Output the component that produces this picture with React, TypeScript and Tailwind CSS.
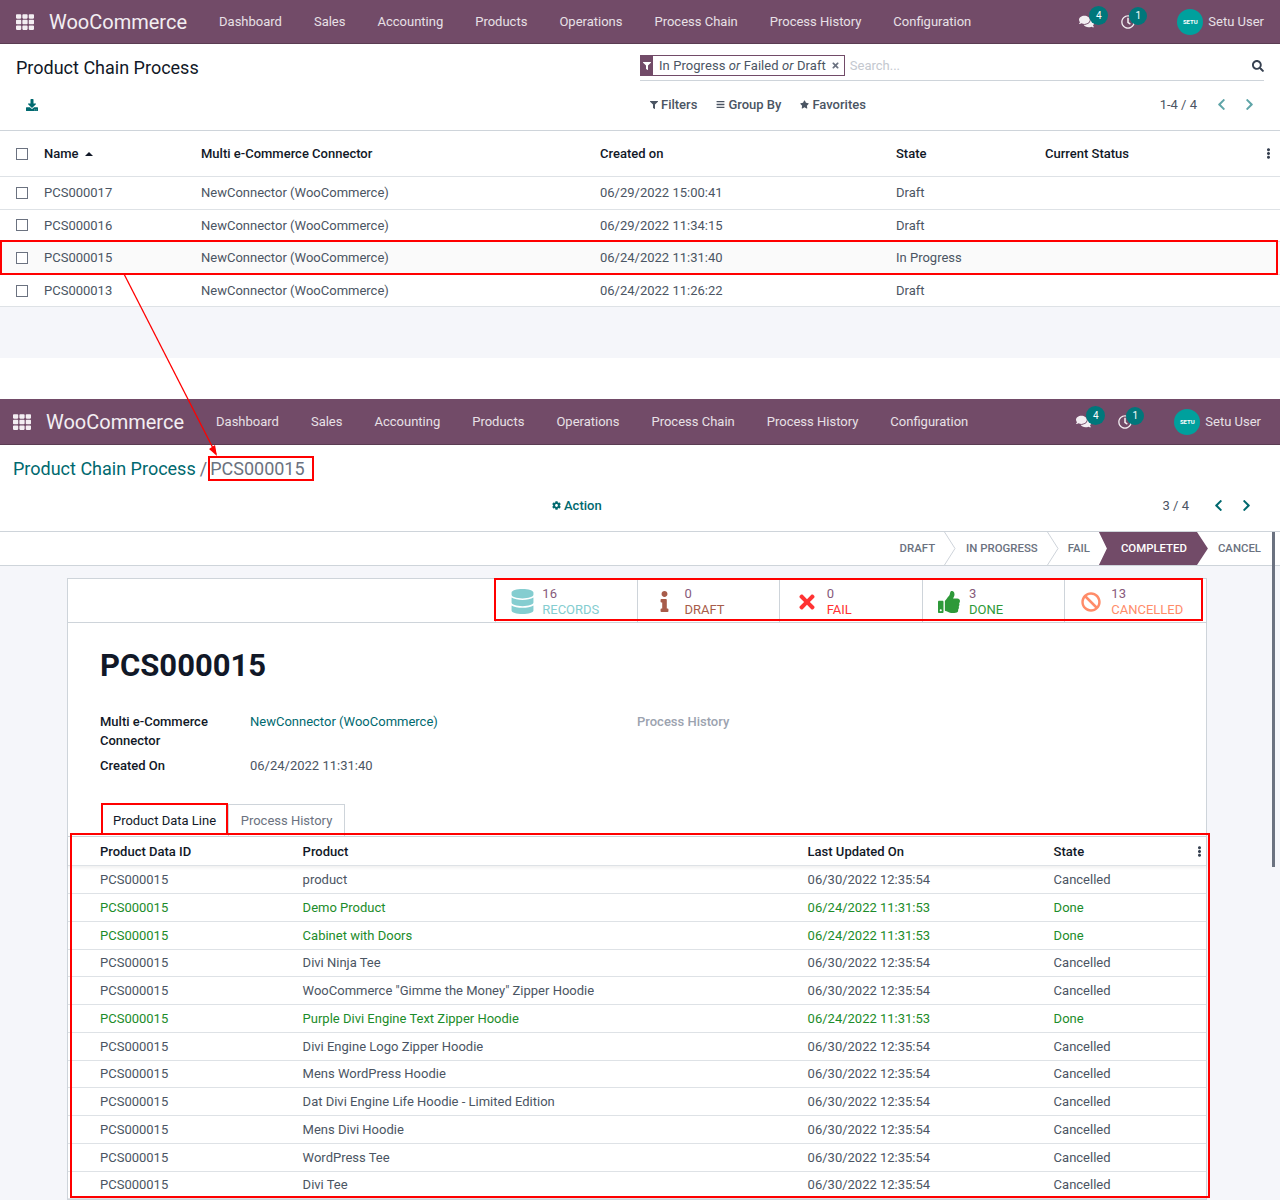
import type { ReactNode } from "react";
import {
  FaBan,
  FaBars,
  FaChevronLeft,
  FaChevronRight,
  FaCog,
  FaComments,
  FaDatabase,
  FaDownload,
  FaEllipsisV,
  FaFilter,
  FaInfo,
  FaRegClock,
  FaSearch,
  FaStar,
  FaTh,
  FaThumbsUp,
  FaTimes,
} from "react-icons/fa";

const MENU = [
  "Dashboard",
  "Sales",
  "Accounting",
  "Products",
  "Operations",
  "Process Chain",
  "Process History",
  "Configuration",
];

const LIST_ROWS = [
  { name: "PCS000017", created: "06/29/2022 15:00:41", state: "Draft" },
  { name: "PCS000016", created: "06/29/2022 11:34:15", state: "Draft" },
  { name: "PCS000015", created: "06/24/2022 11:31:40", state: "In Progress" },
  { name: "PCS000013", created: "06/24/2022 11:26:22", state: "Draft" },
];

const LINES = [
  { product: "product", done: false },
  { product: "Demo Product", done: true },
  { product: "Cabinet with Doors", done: true },
  { product: "Divi Ninja Tee", done: false },
  { product: 'WooCommerce "Gimme the Money" Zipper Hoodie', done: false },
  { product: "Purple Divi Engine Text Zipper Hoodie", done: true },
  { product: "Divi Engine Logo Zipper Hoodie", done: false },
  { product: "Mens WordPress Hoodie", done: false },
  { product: "Dat Divi Engine Life Hoodie - Limited Edition", done: false },
  { product: "Mens Divi Hoodie", done: false },
  { product: "WordPress Tee", done: false },
  { product: "Divi Tee", done: false },
];

const STATS = [
  { icon: <FaDatabase className="text-[25px]" />, count: "16", label: "RECORDS", color: "text-[#84cdd0]" },
  { icon: <FaInfo className="text-[21px]" />, count: "0", label: "DRAFT", color: "text-[#a85c4a]" },
  { icon: <FaTimes className="text-[22px]" />, count: "0", label: "FAIL", color: "text-[#ff3333]" },
  { icon: <FaThumbsUp className="text-[22px]" />, count: "3", label: "DONE", color: "text-[#2e9939]" },
  { icon: <FaBan className="text-[20px]" />, count: "13", label: "CANCELLED", color: "text-[#ff8c69]" },
];

function Checkbox() {
  return <span className="block h-3 w-3 border border-[#6b7280] bg-white" />;
}

function NavBar({ pl, pr, h }: { pl: string; pr: string; h: string }) {
  return (
    <div className={`flex items-center border-b border-[#5a3c52] bg-[#724b68] text-white ${h} ${pl} ${pr}`}>
      <FaTh className="text-[18px] text-[#f3eef2]" />
      <span className="ml-[15px] text-[20px] leading-none text-[#f3eef2]">WooCommerce</span>
      <div className="ml-[32px] flex gap-[32px] text-[13px] text-[#e8e0e6]">
        {MENU.map((m) => (
          <span key={m}>{m}</span>
        ))}
      </div>
      <div className="ml-auto flex items-center text-[#f3eef2]">
        <span className="relative">
          <FaComments className="text-[15px]" />
          <span className="absolute -top-[8px] left-[10px] flex h-[19px] w-[19px] items-center justify-center rounded-full bg-[#00777b] text-[10px] text-white">
            4
          </span>
        </span>
        <span className="relative ml-[27px]">
          <FaRegClock className="text-[14px]" />
          <span className="absolute -top-[8px] left-[8px] flex h-[18px] w-[18px] items-center justify-center rounded-full bg-[#00777b] text-[10px] text-white">
            1
          </span>
        </span>
        <span className="ml-[42px] flex h-[26px] w-[26px] items-center justify-center rounded-full bg-[#00a09d] text-[6px] font-bold text-white">
          SETU
        </span>
        <span className="ml-[5px] text-[13px] text-[#e8e0e6]">Setu User</span>
      </div>
    </div>
  );
}

function Pager({ label, color, gap }: { label: string; color: string; gap: string }) {
  return (
    <div className="flex items-center text-[13px] text-[#4b5563]">
      <span>{label}</span>
      <FaChevronLeft className={`text-[13px] ${gap} ${color}`} />
      <FaChevronRight className={`ml-[15px] text-[13px] ${color}`} />
    </div>
  );
}

function ListView() {
  const cols = "grid grid-cols-[28px_157px_399px_296px_149px_1fr_16px] items-center";
  return (
    <div className="h-[358px] bg-[#f5f6fa]">
      <NavBar h="h-[44px]" pl="pl-[16px]" pr="pr-[16px]" />
      <div className="relative h-[87px] border-b border-[#ced4da] bg-white">
        <div className="flex items-start justify-between pl-[16px] pr-[16px] pt-[12px]">
          <span className="text-[18px] leading-[24px] text-[#111827]">Product Chain Process</span>
          <div className="flex h-[25px] w-[624px] items-center border-b border-[#ced4da] pb-[5px]">
            <span className="flex h-[21px] w-[13px] items-center justify-center bg-[#724b68] text-white">
              <FaFilter className="text-[8px]" />
            </span>
            <span className="flex h-[21px] items-center border border-l-0 border-[#724b68] pl-[6px] pr-[4px] text-[13px] tracking-[0.07px] text-[#4b5563]">
              <span>
                In Progress <i>or</i> Failed <i>or</i> Draft
              </span>
              <FaTimes className="ml-[5px] text-[9px] text-[#6b7280]" />
            </span>
            <span className="ml-[5px] text-[13px] text-[#c4c8cf]">Search...</span>
            <FaSearch className="ml-auto text-[12px] text-[#374151]" />
          </div>
        </div>
        <div className="mt-[14px] flex items-center pl-[26px] pr-[24px]">
          <FaDownload className="text-[12px] text-[#00696f]" />
          <div className="ml-[612px] flex items-center gap-[19px] text-[13px] font-medium text-[#4b5563]">
            <span className="flex items-center gap-[3px]">
              <FaFilter className="text-[8px]" />
              Filters
            </span>
            <span className="flex items-center gap-[3px]">
              <FaBars className="text-[9px]" />
              Group By
            </span>
            <span className="flex items-center gap-[3px]">
              <FaStar className="text-[9px]" />
              Favorites
            </span>
          </div>
          <div className="ml-auto">
            <Pager label="1-4 / 4" color="text-[#5fa5a8]" gap="ml-[18px]" />
          </div>
        </div>
      </div>
      <div className={`${cols} h-[46px] border-b border-[#dee2e6] bg-white pl-[16px] text-[13px] font-medium text-[#111827] shadow-[0_2px_3px_rgba(0,0,0,0.06)]`}>
        <Checkbox />
        <span className="flex items-center gap-[6px]">
          Name
          <span className="h-0 w-0 border-x-[4px] border-b-[4px] border-x-transparent border-b-[#111827]" />
        </span>
        <span>Multi e-Commerce Connector</span>
        <span>Created on</span>
        <span>State</span>
        <span>Current Status</span>
        <FaEllipsisV className="-ml-[1px] text-[11px] text-[#374151]" />
      </div>
      {LIST_ROWS.map((r, i) => (
        <div
          key={r.name}
          className={`${cols} h-[32.6px] border-b border-[#dee2e6] pl-[16px] text-[13px] text-[#4b5563] ${
            i === 2 ? "bg-[#fafafa]" : "bg-white"
          }`}
        >
          <Checkbox />
          <span>{r.name}</span>
          <span>NewConnector (WooCommerce)</span>
          <span>{r.created}</span>
          <span>{r.state}</span>
        </div>
      ))}
    </div>
  );
}

function Stat({ icon, count, label, color }: { icon: ReactNode; count: string; label: string; color: string }) {
  return (
    <div className="flex h-full w-[142.25px] items-center border-l border-[#ced4da] pt-[2px]">
      <span className={`flex w-[46.5px] justify-center pl-[6px] ${color}`}>{icon}</span>
      <div className="text-[13px] leading-[16px]">
        <div className="tracking-[0.3px] text-[#875a7b]">{count}</div>
        <div className={color}>{label}</div>
      </div>
    </div>
  );
}

function Separator() {
  return (
    <svg width="12" height="33" viewBox="0 0 12 33" className="ml-[9px] mr-[10px]" fill="none" stroke="#ced4da">
      <path d="M0.5 0 L11 16.5 L0.5 33" />
    </svg>
  );
}

function FormView() {
  const lineCols = "grid grid-cols-[202.6px_505px_246px_1fr_16px] items-center pl-[32px]";
  return (
    <div className="h-[801px] overflow-hidden bg-[#f5f6fa]">
      <NavBar h="h-[46px]" pl="pl-[13px]" pr="pr-[19px]" />
      <div className="h-[87px] border-b border-[#ced4da] bg-white">
        <div className="flex h-[47px] items-center pl-[13px] text-[18px]">
          <span className="text-[#00696f]">Product Chain Process</span>
          <span className="ml-[4px] mr-[3px] text-[#6b7280]">/</span>
          <span className="text-[#6b7280]">PCS000015</span>
        </div>
        <div className="mt-[4px] flex items-center pr-[27px]">
          <span className="ml-[552px] flex items-center gap-[3px] text-[13px] font-medium text-[#00696f]">
            <FaCog className="text-[9px]" />
            Action
          </span>
          <div className="ml-auto">
            <Pager label="3 / 4" color="text-[#00696f]" gap="ml-[23px]" />
          </div>
        </div>
      </div>
      <div className="flex h-[34px] items-center justify-end border-b border-[#ced4da] bg-white pr-[19px] text-[11.4px] font-medium text-[#6b7280]">
        <span>DRAFT</span>
        <Separator />
        <span>IN PROGRESS</span>
        <Separator />
        <span className="-ml-[1px]">FAIL</span>
        <span className="ml-[9px] flex h-[33px] w-[109px] items-center bg-[#724b68] pl-[22px] text-white [clip-path:polygon(0_0,90%_0,100%_50%,90%_100%,0_100%,8px_50%)]">
          COMPLETED
        </span>
        <span className="ml-[10px]">CANCEL</span>
      </div>
      <div className="relative mx-[67px] mt-[12px] w-[1140px] border border-[#ced4da] bg-white">
        <div className="flex h-[44px] justify-end border-b border-[#ced4da]">
          {STATS.map((s) => (
            <Stat key={s.label} {...s} />
          ))}
        </div>
        <div className="px-[32px] pt-[23px]">
          <h1 className="text-[31px] font-bold leading-[40px] text-[#111827]">PCS000015</h1>
          <div className="mt-[26px] flex text-[13px] leading-[19px]">
            <div className="w-[150px] font-medium text-[#111827]">
              Multi e-Commerce
              <br />
              Connector
            </div>
            <div className="w-[387px] text-[#00696f]">NewConnector (WooCommerce)</div>
            <div className="font-medium text-[#9ca3af]">Process History</div>
          </div>
          <div className="mt-[6px] flex text-[13px] leading-[19px]">
            <div className="w-[150px] font-medium text-[#111827]">Created On</div>
            <div className="text-[#4b5563]">06/24/2022 11:31:40</div>
          </div>
        </div>
        <div className="mt-[30px] flex h-[32px] items-end border-b border-[#ced4da] pl-[33px] text-[13px]">
          <span className="flex h-[31px] w-[127px] items-center justify-center bg-white text-[#111827]">Product Data Line</span>
          <span className="-mb-[1px] flex h-[33px] w-[117px] items-center justify-center border border-[#ced4da] text-[#6b7280]">
            Process History
          </span>
        </div>
        <div className={`${lineCols} h-[29.4px] border-b border-[#dee2e6] pt-[1px] text-[13px] font-medium text-[#111827] shadow-[0_2px_3px_rgba(0,0,0,0.06)]`}>
          <span>Product Data ID</span>
          <span>Product</span>
          <span>Last Updated On</span>
          <span>State</span>
          <FaEllipsisV className="ml-[4px] text-[11px] text-[#374151]" />
        </div>
        {LINES.map((l, i) => (
          <div
            key={i}
            className={`${lineCols} h-[27.75px] border-b border-[#dee2e6] text-[13px] ${
              l.done ? "text-[#1c8c2a]" : "text-[#4b5563]"
            }`}
          >
            <span>PCS000015</span>
            <span>{l.product}</span>
            <span>{l.done ? "06/24/2022 11:31:53" : "06/30/2022 12:35:54"}</span>
            <span>{l.done ? "Done" : "Cancelled"}</span>
          </div>
        ))}
      </div>
    </div>
  );
}

function Annotations() {
  const box = "absolute border-2 border-[#ff0000]";
  return (
    <>
      <div className={`${box} left-0 top-[240px] h-[35px] w-[1278px]`} />
      <div className={`${box} left-[208px] top-[456px] h-[25px] w-[106px] border-[#f33]`} />
      <div className={`${box} left-[494px] top-[578px] h-[43px] w-[709px]`} />
      <div className={`${box} left-[101px] top-[803px] h-[32px] w-[127px]`} />
      <div className={`${box} left-[70px] top-[833px] h-[365px] w-[1140px]`} />
      <svg className="absolute left-[120px] top-[270px]" width="110" height="190" viewBox="0 0 110 190" fill="none">
        <path d="M4 4 L96 184" stroke="#ff0000" strokeWidth="1.3" />
        <path d="M97 186 L89 179 L95 175 Z" fill="#ff0000" />
      </svg>
      {/* scrollbar thumb of the second capture */}
      <div className="absolute left-[1272px] top-[532px] h-[335px] w-[3px] bg-[#6b7280]" />
    </>
  );
}

export default function App() {
  return (
    <div className="relative h-[1200px] w-[1280px] overflow-hidden bg-white font-['Roboto',sans-serif]">
      <ListView />
      <div className="h-[41px] bg-white" />
      <FormView />
      <Annotations />
    </div>
  );
}
